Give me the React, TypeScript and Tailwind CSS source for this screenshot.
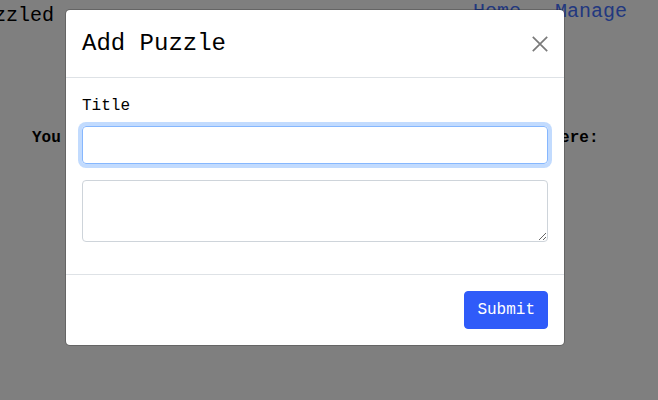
const mono = "font-['Liberation_Mono','Courier_New',monospace]"

export default function App() {
  return (
    <div className={`relative h-[400px] w-full overflow-hidden bg-white text-black ${mono}`}>
      {/* Page behind the dialog */}
      <header className="flex items-start justify-between">
        <a className="ml-[-30px] mt-[1px] text-[20px] leading-[30px]">Puzzled</a>
        <nav className="mr-[31px] mt-[-3px] flex gap-[34px] text-[20px] leading-[30px] text-[#4470ff]">
          <a>Home</a>
          <a>Manage</a>
        </nav>
      </header>
      <p className="mt-[95px] pl-8 text-[16px] font-bold leading-6">
        You have no puzzles yet. Get started by adding one up here:
      </p>

      {/* Backdrop */}
      <div className="absolute inset-0 bg-black/50" />

      {/* Dialog */}
      <div className="absolute inset-0 pl-[65px] pt-[9px]">
        <div className="w-[500px] rounded-[5px] border border-black/20 bg-white bg-clip-padding">
          <div className="flex items-center justify-between border-b border-[#dee2e6] px-4 py-4">
            <h4 className="text-[24px] leading-[35px]">Add Puzzle</h4>
            <button className="flex h-4 w-4 items-center justify-center text-[#7a7a7a]" aria-label="Close">
              <svg width="16" height="16" viewBox="0 0 16 16" fill="none" stroke="currentColor" strokeWidth="1.7">
                <path d="M0.8 0.8 15.2 15.2M15.2 0.8 0.8 15.2" />
              </svg>
            </button>
          </div>
          <div className="p-4">
            <div className="mb-4">
              <label className="mb-2 block text-[16px] leading-6">Title</label>
              <input
                className="block h-[38px] w-full rounded-[4px] border border-[#86b7fe] px-3 shadow-[0_0_0_4px_rgba(13,110,253,0.25)] outline-none"
                type="text"
              />
            </div>
            <div className="mb-4">
              <textarea
                className="block h-[62px] w-full rounded-[4px] border border-[#ced4da] px-3 py-1.5 outline-none"
                rows={2}
              />
            </div>
          </div>
          <div className="flex justify-end border-t border-[#dee2e6] p-4">
            <button className="rounded-[4px] border border-[#2f5bf9] bg-[#2f5bf9] px-3 py-1.5 text-[16px] leading-6 text-white">
              Submit
            </button>
          </div>
        </div>
      </div>
    </div>
  )
}
